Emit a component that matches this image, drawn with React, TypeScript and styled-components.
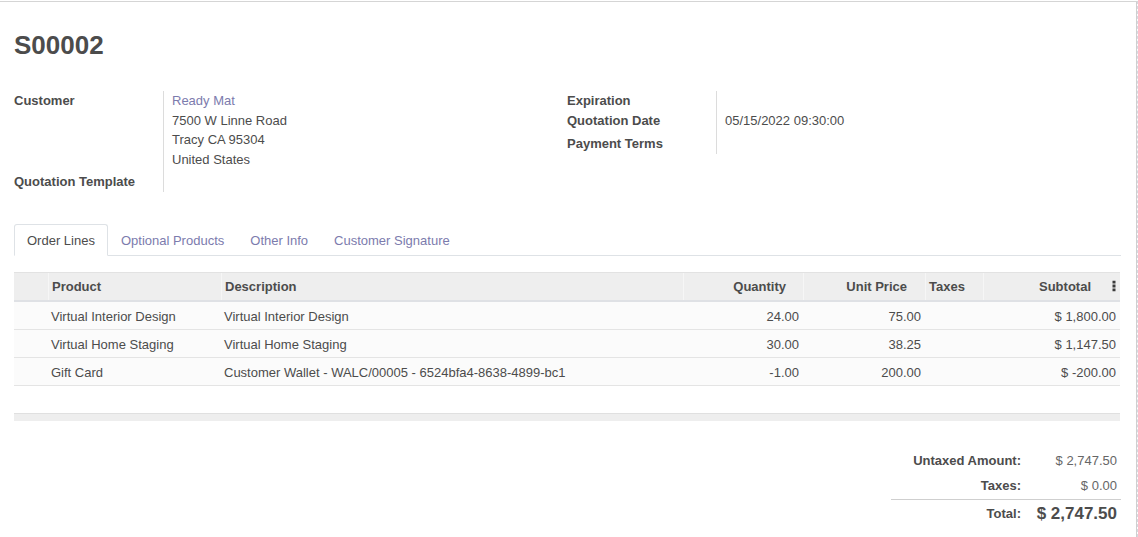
import React from "react";
import styled, { createGlobalStyle } from "styled-components";

const GlobalStyle = createGlobalStyle`
  html, body { margin: 0; padding: 0; background: #ffffff; }
  body {
    font-family: "Liberation Sans", Arial, sans-serif;
    font-size: 13px;
    line-height: 1.5;
    color: #4c4c4c;
  }
  * { box-sizing: border-box; }
`;

const Page = styled.div`
  width: 1138px;
  height: 537px;
  padding-top: 1px;
  overflow: hidden;
`;

const Sheet = styled.div`
  width: 1138px;
  height: 536px;
  border-top: 1px solid #d5d5d5;
  border-right: 1px dashed #d8d8e0;
  padding: 28px 16px 0 14px;
  position: relative;
  &::after {
    content: "";
    position: absolute;
    right: 0;
    top: 0;
    bottom: 0;
    width: 1px;
    background: #cfcfcf;
  }
`;

const Title = styled.h1`
  margin: 0;
  font-size: 26px;
  font-weight: 700;
  line-height: 31px;
  color: #4c4c4c;
`;

const Groups = styled.div`
  display: grid;
  grid-template-columns: 553px 553px;
  margin-top: 30px;
`;

const Group = styled.div`
  display: grid;
  grid-template-columns: 149px 1fr;
  align-content: start;
`;

const Label = styled.div<{ $gap?: number }>`
  font-weight: 700;
  line-height: 19.5px;
  padding-bottom: ${(p) => p.$gap ?? 0}px;
  color: #4c4c4c;
`;

const Value = styled.div<{ $gap?: number }>`
  border-left: 1px solid #dcdcdc;
  padding-left: 8px;
  line-height: 19.5px;
  padding-bottom: ${(p) => p.$gap ?? 0}px;
  min-height: 19.5px;
  color: #4c4c4c;
`;

const Link = styled.span`
  color: #7c7bad;
`;

const Tabs = styled.div`
  display: flex;
  margin-top: 32px;
  border-bottom: 1px solid #dee2e6;
  height: 32px;
`;

const Tab = styled.div<{ $active?: boolean }>`
  height: 32px;
  padding: 2px 12px 0;
  display: flex;
  align-items: center;
  border: 1px solid ${(p) => (p.$active ? "#dee2e6" : "transparent")};
  border-bottom-color: ${(p) => (p.$active ? "#ffffff" : "transparent")};
  border-radius: 3px 3px 0 0;
  background: ${(p) => (p.$active ? "#ffffff" : "transparent")};
  color: ${(p) => (p.$active ? "#4c4c4c" : "#7c7bad")};
  line-height: 1;
`;

const Table = styled.div`
  margin-top: 16px;
  width: 1106px;
`;

const cols = "34px 173px 462px 120px 122px 58px 137px";

const HeadRow = styled.div`
  display: grid;
  grid-template-columns: ${cols};
  height: 30px;
  background: #eeeeee;
  border-top: 1px solid #e2e2e2;
  border-bottom: 2px solid #dfe1e5;
`;

const HeadCell = styled.div<{ $right?: boolean; $first?: boolean; $pr?: number }>`
  display: flex;
  align-items: center;
  justify-content: ${(p) => (p.$right ? "flex-end" : "flex-start")};
  padding: 2px ${(p) => p.$pr ?? 4}px 0 3px;
  border-left: ${(p) => (p.$first ? "none" : "1px solid #f6f6f6")};
  font-weight: 700;
  color: #4c4c4c;
  position: relative;
`;

const Row = styled.div`
  display: grid;
  grid-template-columns: ${cols};
  height: 28px;
  background: #fbfbfb;
  border-bottom: 1px solid #e4e4e4;
`;

const Cell = styled.div<{ $right?: boolean }>`
  display: flex;
  align-items: center;
  justify-content: ${(p) => (p.$right ? "flex-end" : "flex-start")};
  padding: 3px 4px 0 3px;
  white-space: nowrap;
  overflow: hidden;
  color: #4c4c4c;
`;

const Filler = styled.div`
  height: 27px;
`;

const FootBar = styled.div`
  height: 8px;
  background: #eeeeee;
  border-top: 1px solid #e0e0e0;
`;

const Totals = styled.div`
  margin: 27px 0 0 auto;
  width: 230px;
  display: grid;
  grid-template-columns: 130px 100px;
`;

const TLabel = styled.div<{ $line?: boolean; $h: number }>`
  height: ${(p) => p.$h}px;
  display: flex;
  align-items: center;
  justify-content: flex-end;
  padding-top: 2px;
  font-weight: 700;
  color: #4c4c4c;
  border-top: ${(p) => (p.$line ? "1px solid #cfcfcf" : "none")};
`;

const TValue = styled.div<{ $line?: boolean; $big?: boolean; $h: number }>`
  height: ${(p) => p.$h}px;
  display: flex;
  align-items: center;
  justify-content: flex-end;
  padding: 2px 4px 0 0;
  font-weight: ${(p) => (p.$big ? 700 : 400)};
  font-size: ${(p) => (p.$big ? "17px" : "13px")};
  color: ${(p) => (p.$big ? "#4c4c4c" : "#666666")};
  border-top: ${(p) => (p.$line ? "1px solid #cfcfcf" : "none")};
`;

const Kebab = styled.svg`
  position: absolute;
  right: 4px;
  top: 50%;
  transform: translateY(-50%);
`;

const lines = [
  ["Virtual Interior Design", "Virtual Interior Design", "24.00", "75.00", "", "$ 1,800.00"],
  ["Virtual Home Staging", "Virtual Home Staging", "30.00", "38.25", "", "$ 1,147.50"],
  ["Gift Card", "Customer Wallet - WALC/00005 - 6524bfa4-8638-4899-bc1", "-1.00", "200.00", "", "$ -200.00"],
];

export default function App() {
  return (
    <>
      <GlobalStyle />
      <Page>
        <Sheet>
          <Title>S00002</Title>
          <Groups>
            <Group>
              <Label $gap={3}>Customer</Label>
              <Value $gap={3}>
                <Link>Ready Mat</Link>
                <br />
                7500 W Linne Road
                <br />
                Tracy CA 95304
                <br />
                United States
              </Value>
              <Label>Quotation Template</Label>
              <Value />
            </Group>
            <Group>
              <Label>Expiration</Label>
              <Value />
              <Label $gap={4}>Quotation Date</Label>
              <Value $gap={4}>05/15/2022 09:30:00</Value>
              <Label>Payment Terms</Label>
              <Value />
            </Group>
          </Groups>

          <Tabs>
            <Tab $active>Order Lines</Tab>
            <Tab>Optional Products</Tab>
            <Tab>Other Info</Tab>
            <Tab>Customer Signature</Tab>
          </Tabs>

          <Table>
            <HeadRow>
              <HeadCell $first />
              <HeadCell>Product</HeadCell>
              <HeadCell>Description</HeadCell>
              <HeadCell $right $pr={17}>Quantity</HeadCell>
              <HeadCell $right $pr={18}>Unit Price</HeadCell>
              <HeadCell>Taxes</HeadCell>
              <HeadCell $right $pr={29}>
                Subtotal
                <Kebab width="4" height="11" viewBox="0 0 4 11">
                  <rect x="0.5" y="0" width="3" height="3" fill="#3a3a3a" />
                  <rect x="0.5" y="4" width="3" height="3" fill="#3a3a3a" />
                  <rect x="0.5" y="8" width="3" height="3" fill="#3a3a3a" />
                </Kebab>
              </HeadCell>
            </HeadRow>
            {lines.map((l, i) => (
              <Row key={i}>
                <Cell />
                <Cell>{l[0]}</Cell>
                <Cell>{l[1]}</Cell>
                <Cell $right>{l[2]}</Cell>
                <Cell $right>{l[3]}</Cell>
                <Cell>{l[4]}</Cell>
                <Cell $right>{l[5]}</Cell>
              </Row>
            ))}
            <Filler />
            <FootBar />
          </Table>

          <Totals>
            <TLabel $h={24}>Untaxed Amount:</TLabel>
            <TValue $h={24}>$ 2,747.50</TValue>
            <TLabel $h={27}>Taxes:</TLabel>
            <TValue $h={27}>$ 0.00</TValue>
            <TLabel $h={28} $line>Total:</TLabel>
            <TValue $h={28} $line $big>$ 2,747.50</TValue>
          </Totals>
        </Sheet>
      </Page>
    </>
  );
}
